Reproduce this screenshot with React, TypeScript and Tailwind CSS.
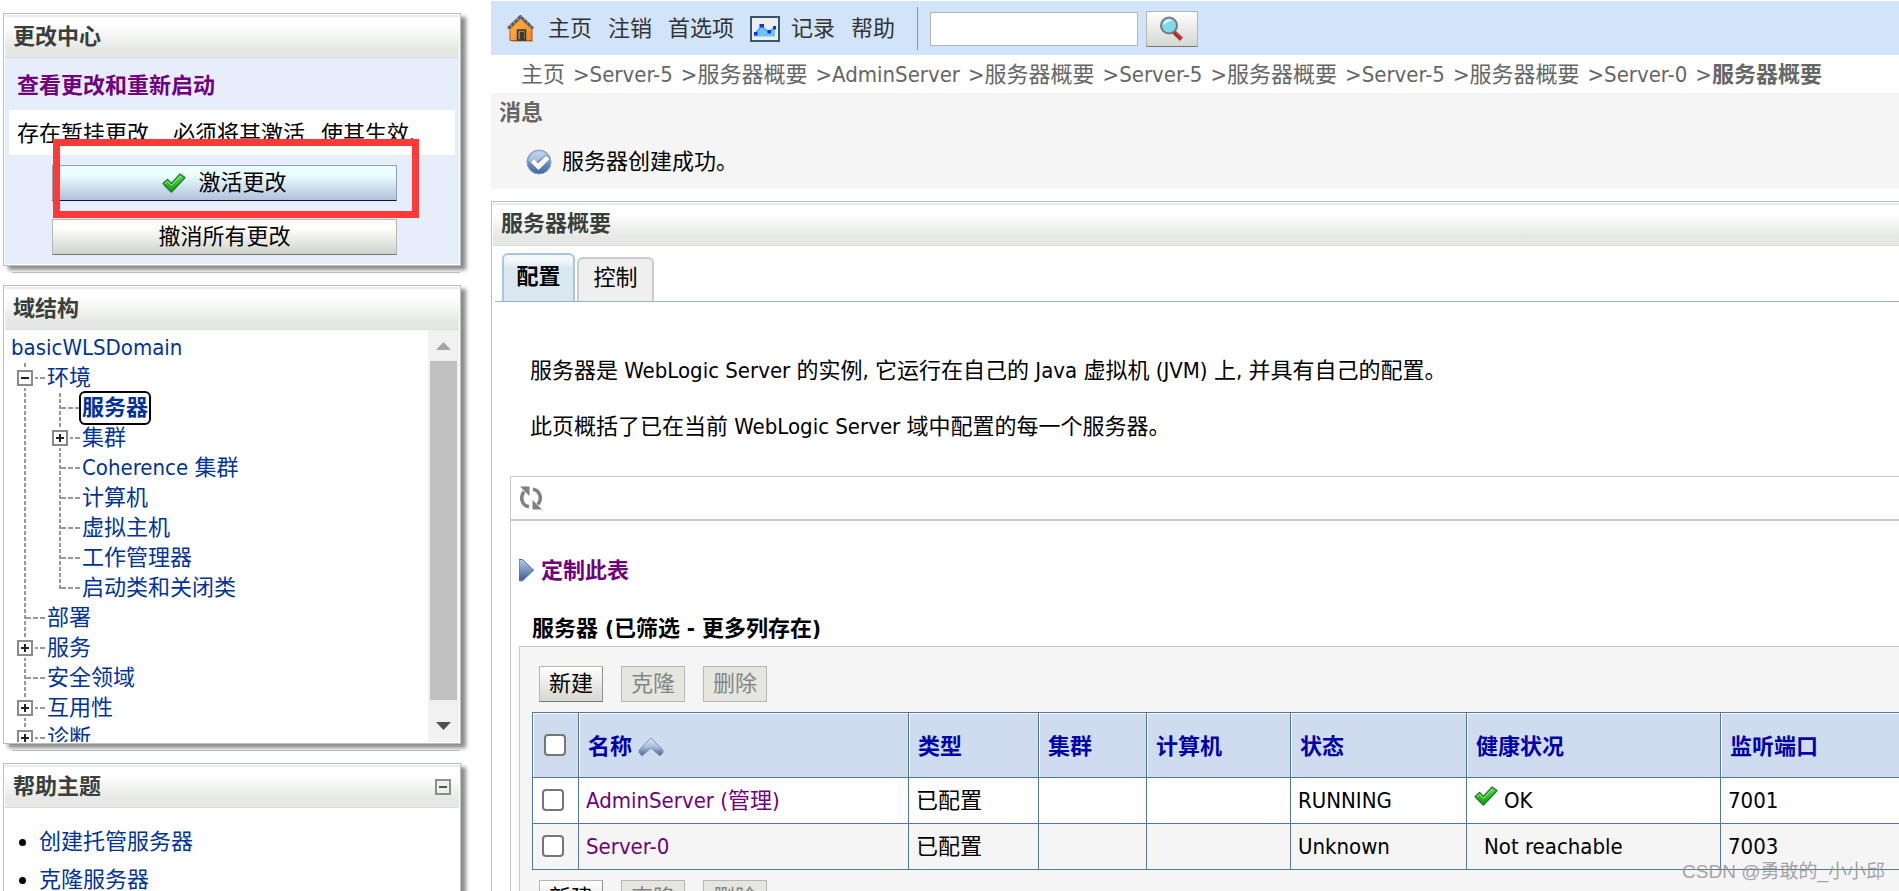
import React from 'react';

type TreeRow = {
  label: string;
  level: 1 | 2;
  toggle?: 'plus' | 'minus';
  last?: boolean;
  selected?: boolean;
};

const treeRows: TreeRow[] = [
  { label: '环境', level: 1, toggle: 'minus' },
  { label: '服务器', level: 2, selected: true },
  { label: '集群', level: 2, toggle: 'plus' },
  { label: 'Coherence 集群', level: 2 },
  { label: '计算机', level: 2 },
  { label: '虚拟主机', level: 2 },
  { label: '工作管理器', level: 2 },
  { label: '启动类和关闭类', level: 2, last: true },
  { label: '部署', level: 1 },
  { label: '服务', level: 1, toggle: 'plus' },
  { label: '安全领域', level: 1 },
  { label: '互用性', level: 1, toggle: 'plus' },
  { label: '诊断', level: 1, toggle: 'plus' },
];

const crumbs = [
  '主页',
  'Server-5',
  '服务器概要',
  'AdminServer',
  '服务器概要',
  'Server-5',
  '服务器概要',
  'Server-5',
  '服务器概要',
  'Server-0',
];

const columns = [
  { label: '类型', width: 'w-[130px]' },
  { label: '集群', width: 'w-[108px]' },
  { label: '计算机', width: 'w-[144px]' },
  { label: '状态', width: 'w-[176px]' },
  { label: '健康状况', width: 'w-[254px]' },
  { label: '监听端口', width: '' },
];

const servers = [
  { name: 'AdminServer (管理)', type: '已配置', state: 'RUNNING', health: 'OK', ok: true, port: '7001' },
  { name: 'Server-0', type: '已配置', state: 'Unknown', health: 'Not reachable', ok: false, port: '7003' },
];

function CheckIcon() {
  return (
    <svg width="24" height="20" viewBox="0 0 24 20" className="shrink-0" aria-hidden="true">
      <defs>
        <linearGradient id="green" x1="0" y1="0" x2="0" y2="1">
          <stop offset="0" stopColor="#5fe05a" />
          <stop offset="1" stopColor="#06a00e" />
        </linearGradient>
      </defs>
      <path d="M2 11l4-4 4 4 9-10 4 3v2L10 19.500H8l-6-6z" fill="#00000033" />
      <path d="M1 10.500l4.500-4L9.500 10.500l8.500-9.500 5 3.500L9.500 19z" fill="url(#green)" stroke="#1f7a22" strokeWidth="1.200" strokeLinejoin="round" />
      <path d="M3 10.500l2.500-2.200 4 4L18.200 3" fill="none" stroke="#a5f29a" strokeWidth="1" />
    </svg>
  );
}

function HomeIcon() {
  return (
    <svg width="28" height="28" viewBox="0 0 28 28" className="shrink-0" aria-hidden="true">
      <defs>
        <linearGradient id="house" x1="0" y1="0" x2="1" y2="1">
          <stop offset="0" stopColor="#ffb85c" />
          <stop offset="1" stopColor="#f08420" />
        </linearGradient>
      </defs>
      <path d="M5 27h21v-2H5z" fill="#00000033" />
      <path d="M3 14L14 3l11 11v11.500H3z" fill="url(#house)" stroke="#b5560c" />
      <path d="M1 13.500L13.500 1.500l12.500 12" fill="none" stroke="#5d6163" strokeWidth="3" strokeDasharray="4 0.500" />
      <path d="M3 15.500L13.500 5l10.500 10.500" fill="none" stroke="#ff9a2e" strokeWidth="1.500" />
      <path d="M10.500 25v-10h8v10z" fill="#8a8172" stroke="#4a3313" strokeWidth="1.500" />
      <path d="M13 17h4v8h-4z" fill="#3a3a3a" />
    </svg>
  );
}

function ChartIcon() {
  return (
    <svg width="30" height="26" viewBox="0 0 30 26" className="shrink-0" aria-hidden="true">
      <rect x="1" y="1" width="28" height="24" fill="#eeeeee" stroke="#34586e" strokeWidth="2" />
      <path d="M4 17.500L11 9.500l8 5.500 6-3.500v9H4z" fill="#6cc4ff" />
      <path d="M5 18l6.500-8 7 5.500 6-4" fill="none" stroke="#3f8df0" strokeWidth="1" />
      <path d="M4 16h3.500v3.500H4zM9.500 8h4.500v3.500h-4.500zM17.500 14h3.500v3.500h-3.500zM23 10h3v3.500h-3z" fill="#0a34ee" />
    </svg>
  );
}

function SearchIcon() {
  return (
    <svg width="26" height="26" viewBox="0 0 26 26" aria-hidden="true">
      <path d="M15 17l7 7" stroke="#00000030" strokeWidth="4" />
      <path d="M14.500 15.500l8 7.500" stroke="#b3201f" strokeWidth="4" />
      <path d="M16 15.500l6.500 6.500" stroke="#e0605c" strokeWidth="1" />
      <circle cx="10" cy="9.500" r="8" fill="#7fd9e6" stroke="#77778c" strokeWidth="2" />
      <path d="M4.500 9a5.500 5.500 0 0 1 9-4.500C10 5 7 7 4.500 9z" fill="#d8f7fb" />
    </svg>
  );
}

function SuccessIcon() {
  return (
    <svg width="26" height="26" viewBox="0 0 26 26" className="shrink-0" aria-hidden="true">
      <defs>
        <linearGradient id="ball" x1="0" y1="0" x2="0" y2="1">
          <stop offset="0" stopColor="#a9c4ea" />
          <stop offset="1" stopColor="#3f659b" />
        </linearGradient>
      </defs>
      <circle cx="13" cy="13" r="12" fill="url(#ball)" stroke="#7f9cc6" />
      <path d="M2.500 12A10.500 10.500 0 0 1 20 5L9 14z" fill="#ffffff" opacity=".35" />
      <path d="M5 13.500l3-3 4 4L20 7l3.500 3L12.500 21z" fill="#ffffff" />
    </svg>
  );
}

function RefreshIcon() {
  return (
    <svg width="24" height="24" viewBox="0 0 24 24" fill="none" aria-hidden="true">
      <path d="M10 20.800C3 19.500 0.500 11.500 5 5.500" stroke="#808080" strokeWidth="3.500" />
      <path d="M1 0.500h9.500V10z" fill="#808080" />
      <path d="M14 3.200C21 4.500 23.500 12.500 19 18.500" stroke="#808080" strokeWidth="3.500" />
      <path d="M23 23.500h-9.500V14z" fill="#808080" />
    </svg>
  );
}

function ExpandIcon() {
  return (
    <svg width="16" height="26" viewBox="0 0 16 26" className="shrink-0" aria-hidden="true">
      <defs>
        <linearGradient id="arrow" x1="0" y1="0" x2="0" y2="1">
          <stop offset="0" stopColor="#b4cbed" />
          <stop offset="1" stopColor="#3d6096" />
        </linearGradient>
      </defs>
      <path d="M1 4v21l3-1 12-12z" fill="#00000026" />
      <path d="M0 1.500h3.500L14.500 12 3.500 22.500H0z" fill="url(#arrow)" stroke="#4a6ca0" />
    </svg>
  );
}

function SortIcon() {
  return (
    <svg width="26" height="20" viewBox="0 0 26 20" aria-hidden="true">
      <defs>
        <linearGradient id="sort" x1="0" y1="0" x2="0" y2="1">
          <stop offset="0" stopColor="#dfe8f5" />
          <stop offset="0.500" stopColor="#a9bddb" />
          <stop offset="1" stopColor="#3d5f92" />
        </linearGradient>
      </defs>
      <path d="M1 13L13 1l12 12v2.500L22 19l-9-8-9 8-3-3.500z" fill="url(#sort)" stroke="#7f96bb" strokeWidth="1" />
    </svg>
  );
}

function Guide({ toggle, last, branch = true }: { toggle?: 'plus' | 'minus'; last?: boolean; branch?: boolean }) {
  return (
    <svg width="35" height="30" viewBox="0 0 35 30" className="shrink-0" aria-hidden="true">
      <path d={last ? 'M14 0v16' : 'M14 0v30'} stroke="#999999" strokeWidth="2" strokeDasharray="4 2" />
      {branch && <path d="M15 15h19" stroke="#999999" strokeWidth="2" strokeDasharray="5 2" />}
      {toggle && (
        <>
          <rect x="4" y="5" width="20" height="20" fill="#ffffff" />
          <rect x="7" y="8" width="14" height="14" fill="#ffffff" stroke="#8a8a8a" strokeWidth="2" />
          <path d={toggle === 'plus' ? 'M10 15h8M14 11v8' : 'M10 15h8'} stroke="#222222" strokeWidth="2" />
        </>
      )}
    </svg>
  );
}

function Panel({ title, action, children }: { title: string; action?: React.ReactNode; children: React.ReactNode }) {
  return (
    <section className="relative border border-[#b9bfbe] bg-white p-px shadow-[5px_4px_4px_#8c8c8c] after:absolute after:right-0 after:-bottom-2 after:left-2 after:h-px after:bg-[#bdbdbd]">
      <header className="flex h-[43px] items-center justify-between border-t-2 border-b border-t-[#e9eaea] border-b-[#dcdcdc] bg-linear-to-b from-white from-20% to-[#e6e8e5] to-80% px-2">
        <h2 className="font-bold text-[#3a3f3b]">{title}</h2>
        {action}
      </header>
      {children}
    </section>
  );
}

function TableButtons() {
  const base = 'h-9 w-16 border leading-8';
  return (
    <div className="flex gap-[18px] pl-[19px]">
      <button className={`${base} border-[#b5b8b0] border-r-[#8f918c] border-b-[#777873] bg-linear-to-b from-white to-[#d5d7d0]`}>新建</button>
      <button disabled className={`${base} border-[#b5b8b0] bg-[#e4e6df] text-[#858585]`}>克隆</button>
      <button disabled className={`${base} border-[#b5b8b0] bg-[#e4e6df] text-[#858585]`}>删除</button>
    </div>
  );
}

const checkbox = 'block size-[22px] appearance-none rounded border-2 border-[#767676] bg-white';

export default function App() {
  return (
    <div className="relative flex h-screen overflow-hidden bg-white font-['DejaVu_Sans_Condensed','Noto_Sans_CJK_SC',sans-serif] text-[22px] leading-[30px] text-black">
      <aside className="flex w-[491px] shrink-0 flex-col gap-[19px] pt-[13px] pr-[30px] pl-[3px]">
        <Panel title="更改中心">
          <div className="bg-[#e6eefb] px-1 pb-[9px]">
            <div className="flex h-[52px] items-center pt-[3px] pl-2">
              <a href="#changes" className="font-bold text-[#70007c]">查看更改和重新启动</a>
            </div>
            <p className="flex h-[45px] items-center gap-6 bg-white pt-[2px] pl-2">
              <span>存在暂挂更改</span>
              <span className="flex gap-4">
                <span>必须将其激活</span>
                <span>使其生效.</span>
              </span>
            </p>
            <div className="relative flex flex-col gap-[18px] pt-[10px] pr-[58px] pl-[43px]">
              <button className="flex h-9 items-center justify-center gap-3 border border-[#8f9fb8] border-b-[#101828] bg-linear-to-b from-[#ecffff] from-25% to-[#b3c1dd]">
                <CheckIcon />
                激活更改
              </button>
              <button className="h-9 border border-[#b5b8b0] border-b-[#777873] bg-linear-to-b from-[#fdfefa] from-25% to-[#d0d2cb] leading-[34px]">
                撤消所有更改
              </button>
              <div className="pointer-events-none absolute -top-4 left-11 h-[79px] w-[366px] border-7 border-[#fd3a38]" />
            </div>
          </div>
        </Panel>

        <Panel title="域结构">
          <div className="flex h-[412px]">
            <nav className="min-w-0 flex-1 overflow-hidden pt-[3px] pl-[6px] text-[#003399]">
              <a href="#domain" className="block">basicWLSDomain</a>
              <ul>
                {treeRows.map((row) => (
                  <li key={row.label} className="flex h-[30px] items-center">
                    {row.level === 2 && <Guide branch={false} />}
                    <Guide toggle={row.toggle} last={row.last} />
                    <a
                      href={`#${row.label}`}
                      className={row.selected ? 'rounded-sm px-px font-bold outline-2 outline-black' : 'pl-px'}
                    >
                      {row.label}
                    </a>
                  </li>
                ))}
              </ul>
            </nav>
            <div className="flex w-[31px] flex-col items-center bg-[#f1f1f1]">
              <svg width="31" height="31" viewBox="0 0 31 31" aria-hidden="true">
                <path d="M8 20l7.500-8 7.500 8z" fill="#a3a3a3" />
              </svg>
              <div className="w-[27px] flex-1 bg-[#c1c1c1]" />
              <svg width="31" height="42" viewBox="0 0 31 42" aria-hidden="true">
                <path d="M8 22l7.500 8 7.500-8z" fill="#505050" />
              </svg>
            </div>
          </div>
        </Panel>

        <Panel
          title="帮助主题"
          action={
            <button aria-label="折叠" className="flex size-4 items-center justify-center border-2 border-[#8b8f88] bg-[#eef0ea]">
              <span className="h-[2px] w-2 bg-[#555555]" />
            </button>
          }
        >
          <ul className="list-disc pt-[15px] pb-10 pl-[34px] leading-[38px]">
            <li><a href="#create" className="text-[#003399]">创建托管服务器</a></li>
            <li><a href="#clone" className="text-[#003399]">克隆服务器</a></li>
          </ul>
        </Panel>
      </aside>

      <main className="min-w-0 flex-1 pt-px">
        <div className="flex h-[54px] items-center bg-[#d2e4fa] pt-px pl-4 text-[#333333]">
          <HomeIcon />
          <nav className="flex items-center gap-4 pl-[13px]">
            <a href="#home">主页</a>
            <a href="#logout">注销</a>
            <a href="#prefs">首选项</a>
            <a href="#record" className="flex items-center gap-[11px]">
              <ChartIcon />
              记录
            </a>
            <a href="#help">帮助</a>
          </nav>
          <form className="ml-[22px] flex h-[43px] items-center border-l border-[#8496ad] pl-3">
            <input aria-label="搜索" type="text" className="h-[34px] w-[208px] border border-[#b5b8b0] bg-white px-2" />
            <button
              type="button"
              aria-label="搜索"
              className="ml-2 flex h-9 w-[52px] items-center justify-center border border-[#b5b8b0] border-b-[#777873] bg-linear-to-b from-white to-[#d5d7d0]"
            >
              <SearchIcon />
            </button>
          </form>
        </div>

        <nav aria-label="breadcrumb" className="flex h-[38px] items-center gap-2 pt-[2px] pl-[30px] whitespace-nowrap text-[#666666]">
          {crumbs.map((crumb, i) => (
            <span key={i}>
              {i > 0 && '>'}
              <a href="#crumb">{crumb}</a>
            </span>
          ))}
          <span>&gt;<b>服务器概要</b></span>
        </nav>

        <section className="h-24 bg-[#f5f5f5] pt-[5px] pl-2">
          <h2 className="font-bold text-[#666666]">消息</h2>
          <p className="flex items-center gap-[10px] pt-[19px] pl-[27px]">
            <SuccessIcon />
            服务器创建成功。
          </p>
        </section>

        <section className="mt-3 border-t border-l border-[#b9bfbe] pt-px pl-px">
          <header className="flex h-[43px] items-center border-t-2 border-b border-t-[#e9eaea] border-b-[#dcdcdc] bg-linear-to-b from-white from-20% to-[#e6e8e5] to-80% pb-[2px] pl-2">
            <h1 className="font-bold text-[#3a3f3b]">服务器概要</h1>
          </header>

          <div role="tablist" className="ml-[2px] flex h-14 items-end gap-[2px] border-b border-[#94b1cd] pl-[7px]">
            <button role="tab" aria-selected="true" className="h-12 w-[73px] rounded-t-md border-2 border-b-0 border-[#a9c4e4] bg-linear-to-b from-[#f4f8fb] from-10% to-[#d9e7f1] to-30% pb-[2px] font-bold">
              配置
            </button>
            <button role="tab" aria-selected="false" className="h-11 w-[77px] rounded-t-md border-2 border-b-0 border-[#cbcbcb] bg-[#efefef] pb-[5px]">
              控制
            </button>
          </div>

          <div className="flex flex-col gap-[26px] pt-[54px] pl-[37px] whitespace-nowrap">
            <p>服务器是 WebLogic Server 的实例, 它运行在自己的 Java 虚拟机 (JVM) 上, 并具有自己的配置。</p>
            <p>此页概括了已在当前 WebLogic Server 域中配置的每一个服务器。</p>
          </div>

          <div className="mt-[34px] ml-[17px] border-t border-l border-[#c9c9c9]">
            <div className="flex h-11 items-center border-b-2 border-[#c9c9c9] pl-2">
              <button aria-label="刷新">
                <RefreshIcon />
              </button>
            </div>
            <div className="pl-2">
              <a href="#customize" className="mt-[35px] flex items-center gap-[6px] font-bold text-[#70007c]">
                <ExpandIcon />
                定制此表
              </a>
              <h3 className="mt-7 pl-[13px] font-bold">服务器 (已筛选 - 更多列存在)</h3>

              <div className="mt-[2px] border-t border-l border-[#c9c9c9] bg-[#f5f5f5] pt-[19px] pb-10">
                <TableButtons />
                <div className="my-[10px] pl-3">
                  <table className="w-full table-fixed border-collapse text-left">
                    <thead>
                      <tr className="h-[65px] bg-[#cfdcef] text-[#0000aa]">
                        <th className="w-[46px] border border-[#53779f] pl-[11px] shadow-[inset_1px_1px_#ffffff]">
                          <input type="checkbox" aria-label="全选" className={checkbox} />
                        </th>
                        <th className="w-[330px] border border-[#53779f] pt-1 pl-[9px] shadow-[inset_1px_1px_#ffffff]">
                          <a href="#sort" className="flex items-center gap-[6px]">
                            名称
                            <SortIcon />
                          </a>
                        </th>
                        {columns.map((col) => (
                          <th key={col.label} className={`${col.width} border border-[#53779f] pt-1 pl-[9px] shadow-[inset_1px_1px_#ffffff] last:border-r-0`}>
                            {col.label}
                          </th>
                        ))}
                      </tr>
                    </thead>
                    <tbody>
                      {servers.map((s) => (
                        <tr key={s.name} className="h-[46px] odd:bg-white even:bg-[#f5f5f5] *:border *:border-[#53779f] *:pl-[7px] *:last:border-r-0">
                          <td className="pb-[2px]">
                            <input type="checkbox" aria-label={s.name} className={`${checkbox} ml-[2px]`} />
                          </td>
                          <td><a href="#server" className="text-[#70007c]">{s.name}</a></td>
                          <td>{s.type}</td>
                          <td />
                          <td />
                          <td>{s.state}</td>
                          <td>
                            <span className="flex items-start gap-[6px]">
                              {s.ok ? <CheckIcon /> : <span className="w-1" />}
                              {s.health}
                            </span>
                          </td>
                          <td>{s.port}</td>
                        </tr>
                      ))}
                    </tbody>
                  </table>
                </div>
                <TableButtons />
              </div>
            </div>
          </div>
        </section>
      </main>

      <span className="absolute right-[14px] bottom-1 font-['Liberation_Sans','Noto_Sans_CJK_SC',sans-serif] text-[19px] leading-[30px] text-[#8e8e8ecc]">
        CSDN @勇敢的_小小邱
      </span>
    </div>
  );
}
